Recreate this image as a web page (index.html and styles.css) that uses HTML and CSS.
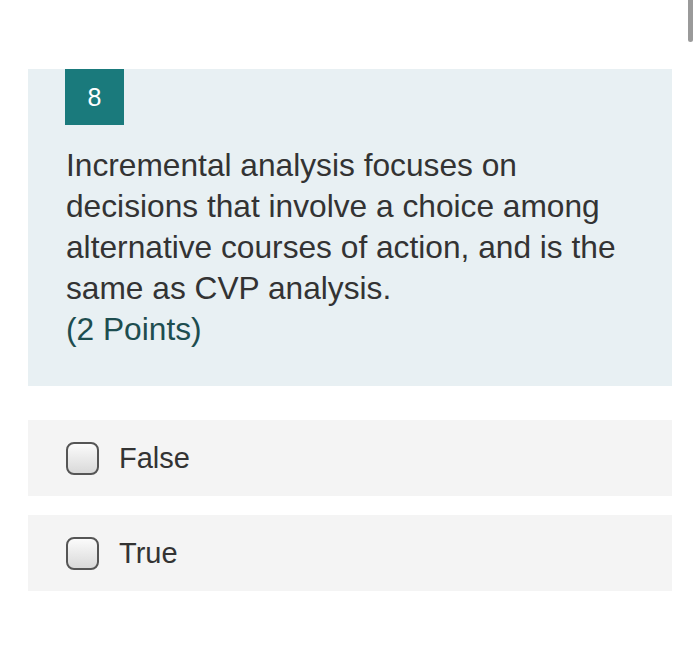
FILE: index.html
```html
<!DOCTYPE html>
<html lang="en">
<head>
<meta charset="utf-8">
<link rel="stylesheet" href="styles.css">
</head>
<body>
<div class="scrollbar"></div>
<main class="page">
  <section class="question">
    <div class="badge">8</div>
    <p class="qtext">Incremental analysis focuses on decisions that involve a choice among alternative courses of action, and is the same as CVP analysis.<br><span class="points">(2 Points)</span></p>
  </section>
  <div class="options">
    <label class="option"><span class="box"></span><span class="label">False</span></label>
    <label class="option"><span class="box"></span><span class="label">True</span></label>
  </div>
</main>
</body>
</html>
```
FILE: styles.css
```css
html, body {
  margin: 0;
  padding: 0;
  background: #ffffff;
}
body {
  font-family: "Liberation Sans", Arial, sans-serif;
  color: #333333;
  width: 700px;
  height: 658px;
  overflow: hidden;
}
.scrollbar {
  position: absolute;
  top: 0;
  left: 688px;
  width: 5px;
  height: 42px;
  background: #9a9a9a;
  border-radius: 0 0 3px 3px;
}
.page {
  padding: 69px 28px 0 28px;
}
.question {
  background: #e8f0f3;
  padding: 0 40px 36px 38px;
}
.badge {
  width: 59px;
  height: 56px;
  margin-left: -1px;
  background: #1a7a7c;
  color: #ffffff;
  font-size: 25px;
  display: flex;
  align-items: center;
  justify-content: center;
}
.qtext {
  margin: 20px 0 0 0;
  font-size: 31.7px;
  line-height: 41px;
  color: #333333;
}
.points {
  color: #1d4d4f;
}
.options {
  display: flex;
  flex-direction: column;
  gap: 19px;
  margin-top: 34px;
}
.option {
  display: flex;
  align-items: center;
  height: 76px;
  background: #f4f4f4;
  padding-left: 38px;
  gap: 20px;
}
.box {
  width: 29px;
  height: 29px;
  border: 2px solid #555555;
  border-radius: 8px;
  background: linear-gradient(#fbfbfb, #d9d9d9);
  box-sizing: content-box;
}
.label {
  font-size: 29px;
  color: #333333;
}
```
